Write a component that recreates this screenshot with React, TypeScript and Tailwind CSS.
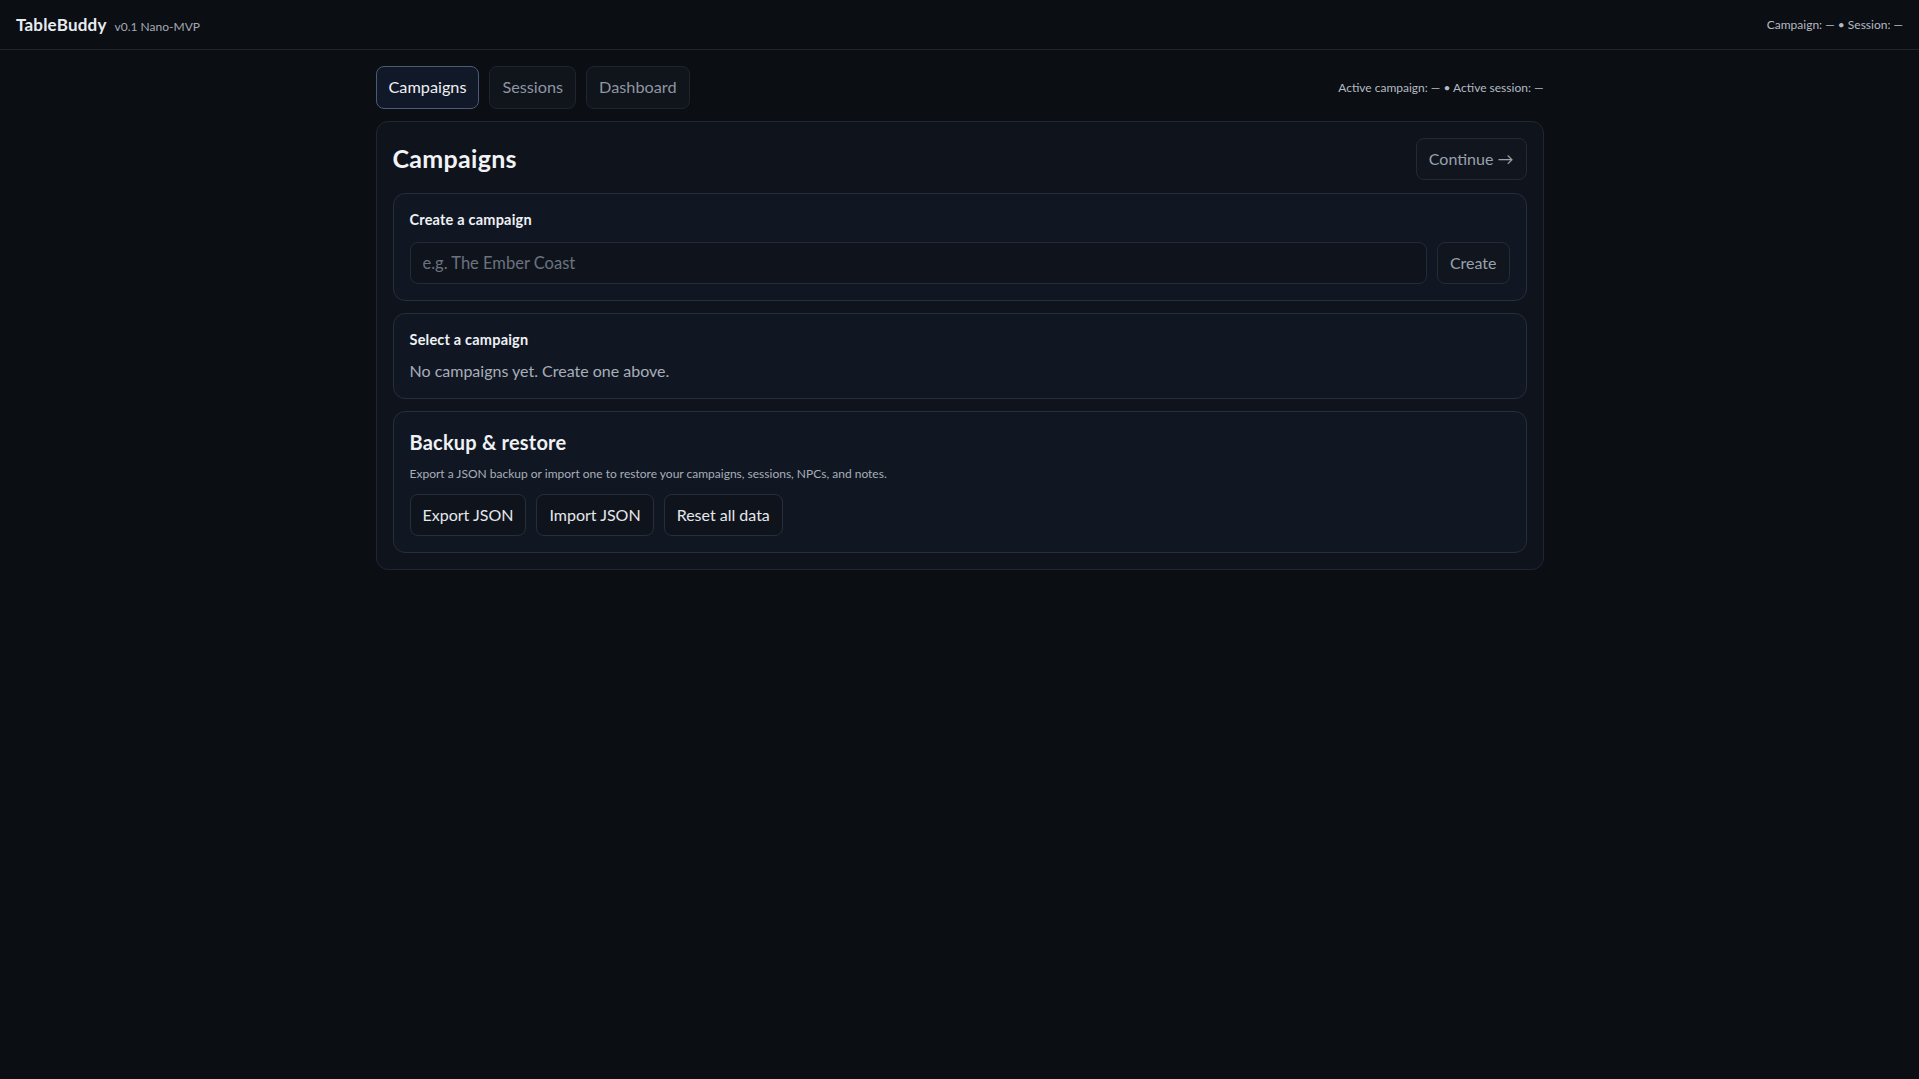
import { useState } from "react";

const tabs = ["Campaigns", "Sessions", "Dashboard"];

const font = { fontFamily: '"Segoe UI", Lato, "Noto Sans", sans-serif' };

const App = () => {
  const [tab, setTab] = useState<string>("Campaigns");
  const [name, setName] = useState<string>("");

  return (
    <div className="min-h-screen bg-[#0b0e13] text-[#e5e7eb]" style={font}>
      <header className="flex h-[50px] items-center justify-between border-b border-[#20252e] px-4">
        <div className="flex items-baseline gap-2">
          <span className="text-[17px] font-bold tracking-[0.2px] text-[#e8ebf0]">TableBuddy</span>
          <span className="text-[12px] text-[#a3a9b4]">v0.1 Nano-MVP</span>
        </div>
        <div className="text-[12px] text-[#b4bac4]">Campaign: — • Session: —</div>
      </header>

      <main className="mx-auto max-w-[1200px] px-4 pt-4">
        <div className="flex items-center justify-between">
          <nav className="flex gap-2.5">
            {tabs.map((t) =>
              t === tab ? (
                <button
                  key={t}
                  onClick={() => setTab(t)}
                  className="h-[43px] rounded-lg border border-[#4a5a78] bg-[#111827] px-3 text-[16.25px] text-[#eef1f5]"
                >
                  {t}
                </button>
              ) : (
                <button
                  key={t}
                  onClick={() => setTab(t)}
                  className="h-[43px] rounded-lg border border-[#1e2430] bg-[#10141b] px-3 text-[16.25px] text-[#8e96a3]"
                >
                  {t}
                </button>
              )
            )}
          </nav>
          <div className="text-[12px] text-[#b4bac4]">Active campaign: — • Active session: —</div>
        </div>

        <section className="mt-3 rounded-xl border border-[#1f2633] bg-[#0f141c] p-4">
          <div className="flex items-center justify-between">
            <h1 className="text-[25px] font-bold tracking-[0.3px] text-[#f1f3f6]">Campaigns</h1>
            <button className="h-[42px] rounded-lg border border-[#222a36] bg-[#10151e] px-3 text-[16px] text-[#9aa1ad]">
              Continue →
            </button>
          </div>

          <div className="mt-[13px] flex flex-col gap-3">
            <div className="rounded-xl border border-[#262e3b] bg-[#111722] p-4">
              <div className="text-[14.5px] leading-5 font-bold tracking-[0.2px] text-[#eef1f5]">Create a campaign</div>
              <div className="mt-3 flex gap-2.5">
                <input
                  value={name}
                  onChange={(e) => setName(e.target.value)}
                  placeholder="e.g. The Ember Coast"
                  className="h-[42px] flex-1 rounded-lg border border-[#232b37] bg-[#0f141c] px-3 text-[16.5px] text-[#e5e7eb] outline-none placeholder:text-[#6b7280]"
                />
                <button className="h-[42px] rounded-lg border border-[#232b37] bg-[#10151e] px-3 text-[16px] text-[#9aa1ad]">
                  Create
                </button>
              </div>
            </div>

            <div className="rounded-xl border border-[#262e3b] bg-[#111722] p-4">
              <div className="text-[14.5px] leading-5 font-bold tracking-[0.2px] text-[#eef1f5]">Select a campaign</div>
              <div className="mt-2.5 text-[16px] leading-[22px] text-[#a7aeb9]">No campaigns yet. Create one above.</div>
            </div>

            <div className="rounded-xl border border-[#262e3b] bg-[#111722] p-4">
              <h2 className="text-[20px] leading-7 font-bold tracking-[0.2px] text-[#eef1f5]">Backup &amp; restore</h2>
              <p className="mt-2.5 text-[12px] leading-4 text-[#a7aeb9]">
                Export a JSON backup or import one to restore your campaigns, sessions, NPCs, and notes.
              </p>
              <div className="mt-3 flex gap-2.5">
                <button className="h-[42px] rounded-lg border border-[#262e3b] bg-[#0f141c] px-3 text-[16px] text-[#e5e7eb]">
                  Export JSON
                </button>
                <button className="h-[42px] rounded-lg border border-[#262e3b] bg-[#0f141c] px-3 text-[16px] text-[#e5e7eb]">
                  Import JSON
                </button>
                <button className="h-[42px] rounded-lg border border-[#262e3b] bg-[#0f141c] px-3 text-[16px] text-[#e5e7eb]">
                  Reset all data
                </button>
              </div>
            </div>
          </div>
        </section>
      </main>
    </div>
  );
};

export default App;
